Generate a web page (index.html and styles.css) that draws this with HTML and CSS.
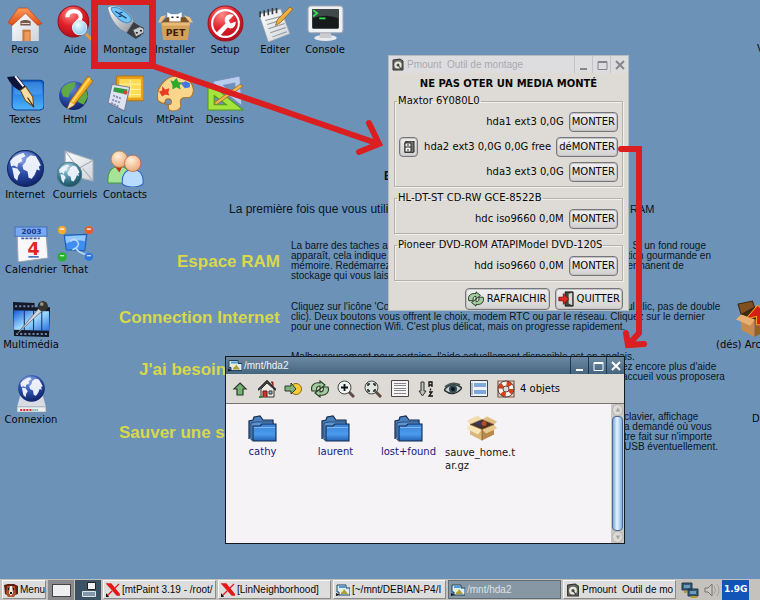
FILE: index.html
```html
<!DOCTYPE html>
<html lang="fr">
<head>
<meta charset="utf-8">
<title>Bureau</title>
<link rel="stylesheet" href="styles.css">
</head>
<body>
<svg class="defs" aria-hidden="true">
  <defs>
    <linearGradient id="blue" x1="0" y1="0" x2="0" y2="1"><stop offset="0" stop-color="#1260c8"/><stop offset="1" stop-color="#4cb4ff"/></linearGradient>
    <linearGradient id="roof" x1="0" y1="0" x2="0" y2="1"><stop offset="0" stop-color="#ff9a58"/><stop offset="1" stop-color="#dd4a12"/></linearGradient>
    <linearGradient id="metal" x1="0" y1="0" x2="1" y2="1"><stop offset="0" stop-color="#ffffff"/><stop offset="1" stop-color="#8d949c"/></linearGradient>
    <linearGradient id="paper" x1="0" y1="0" x2="1" y2="1"><stop offset="0" stop-color="#ffffff"/><stop offset="1" stop-color="#cfd3da"/></linearGradient>
    <linearGradient id="folderFill" x1="0" y1="0" x2="0" y2="1"><stop offset="0" stop-color="#3c84d8"/><stop offset=".6" stop-color="#4a9aec"/><stop offset="1" stop-color="#2563b4"/></linearGradient>
    <linearGradient id="film" x1="0" y1="0" x2="1" y2="1"><stop offset="0" stop-color="#1658d8"/><stop offset=".5" stop-color="#9cdcff"/><stop offset="1" stop-color="#2a70e0"/></linearGradient>
    <radialGradient id="red" cx=".4" cy=".25" r=".8"><stop offset="0" stop-color="#ff8c88"/><stop offset=".5" stop-color="#e0202a"/><stop offset="1" stop-color="#a80c18"/></radialGradient>
    <radialGradient id="world" cx=".4" cy=".25" r=".8"><stop offset="0" stop-color="#6c8ce0"/><stop offset=".5" stop-color="#2a4ea8"/><stop offset="1" stop-color="#0c1e60"/></radialGradient>
    <radialGradient id="teal" cx=".4" cy=".25" r=".8"><stop offset="0" stop-color="#a4d0e0"/><stop offset=".6" stop-color="#347890"/><stop offset="1" stop-color="#184858"/></radialGradient>
    <radialGradient id="skin" cx=".4" cy=".3" r=".8"><stop offset="0" stop-color="#fff0d8"/><stop offset="1" stop-color="#e8a070"/></radialGradient>
    <radialGradient id="lens" cx=".4" cy=".3" r=".8"><stop offset="0" stop-color="#f0fbff"/><stop offset="1" stop-color="#78c4ec"/></radialGradient>
    <symbol id="continents" viewBox="0 0 36 36">
      <path d="M3 11C6 7 11 4 16 3l2 3-4 2 1 3-4 2-1 4-3-2-3 1zM5 17l5 1 3 4-2 3-1 5-3-3-1-5zM19 8l4-3 5 1 3 5 2 4-2 1 1 4-3-1-2 5-3 4-3-1-1-6-4-2-1-4 3-3z" fill="#e8eefa"/>
      <ellipse cx="17" cy="8" rx="12" ry="6" fill="#fff" opacity=".18"/>
    </symbol>
    <symbol id="box" viewBox="0 0 32 26">
      <path d="M4 9l12 5v11L4 19z" fill="#d9b679"/><path d="M28 9l-12 5v11l12-6z" fill="#b8894c"/>
      <path d="M4 9l12-5 12 5-12 5z" fill="#4a3020"/>
      <path d="M4 9L16 4l-4-4L1 5z" fill="#f2dcae"/><path d="M28 9L16 4l5-3 10 5z" fill="#dfbd83"/>
      <circle cx="13" cy="8" r="2.500" fill="#30386c"/><circle cx="18" cy="8" r="2.500" fill="#b44c2c"/>
      <path d="M4 9l12 5-4 5L0 13z" fill="#f7e4ba"/><path d="M28 9l-12 5 4 4 11-5z" fill="#e9c98f"/>
      <path d="M4 9l12-5 12 5-12 5zM16 14v11" fill="none" stroke="#7c5a2c" stroke-width=".7"/>
    </symbol>
    <symbol id="folder" viewBox="0 0 30 27">
      <path d="M1 24V6l4-1 1-3 6-1 3 4h10v6" fill="#4a80bc" stroke="#142c4c" stroke-width="1.2"/>
      <path d="M3 25V8l5-1h17v18z" fill="#5d94d0" stroke="#1c3c64" stroke-width=".8"/>
      <path d="M5 11h7l2-2h14v17H5z" fill="url(#folderFill)" stroke="#122c50" stroke-width="1.1"/>
      <path d="M6 12.500h21" stroke="#8cc2fa" stroke-width=".8"/>
    </symbol>
    <symbol id="recycle" viewBox="0 0 18 18">
      <path d="M1 11C-1 5 4 2 9 3l0-2 5 4-5 4 0-3C6 6 5 8 6 11zM17 7c2 6-3 9-8 8l0 2-5-4 5-4 0 3c3 0 4-2 3-5z" fill="#a5cba0" stroke="#243c24" stroke-width="1.1"/>
    </symbol>
    <symbol id="pictures" viewBox="0 0 14 12">
      <path d="M1 1h9v3h4v7H3V8H1z" fill="#d8eef4" stroke="#1c425c"/><path d="M3 2h6v2H3z" fill="#4c9cd8"/><path d="M5 9l3-4 4 5H5z" fill="#b09c30"/><path d="M0 12V9l4 2z" fill="#101820"/><circle cx="6" cy="6" r="1.5" fill="#f4f0b0"/>
    </symbol>
    <symbol id="xlogo" viewBox="0 0 14 14">
      <path d="M1 1h4l9 11h-3zM13 1l-5 5M6 8l-5 5" fill="#e41818" stroke="#e41818" stroke-width="1.3"/><path d="M0 14v-4l3 4z" fill="#111"/>
    </symbol>
    <symbol id="disk" viewBox="0 0 12 13">
      <path d="M1 2l7-1 3 2v9H1z" fill="#686b64" stroke="#30302e"/><circle cx="6" cy="7" r="3.6" fill="#e8e8e0"/><circle cx="6" cy="7" r="1.5" fill="#505048"/><path d="M6 7l3 4" stroke="#333"/>
    </symbol>
    <symbol id="minimize" viewBox="0 0 12 12"><path d="M2 10h7" stroke="currentColor" stroke-width="2"/></symbol>
    <symbol id="maximize" viewBox="0 0 12 12"><path d="M2 2.5h9v8H2zM2 3.5h9" fill="none" stroke="currentColor"/></symbol>
    <symbol id="close" viewBox="0 0 12 12"><path d="M2 2l8 8M10 2l-8 8" stroke="currentColor" stroke-width="2"/></symbol>
  </defs>
</svg>

<main class="desktop">
  <section class="wallpaper">
    <b class="tip-head">B</b>
    <p class="tip tip--intro">La première fois que vous utilis</p>
    <p class="tip tip--intro-end">RAM</p>
    <h2 class="topic topic--ram">Espace RAM</h2>
    <p class="tip tip--ram">La barre des taches a<br>apparaît, cela indique<br>mémoire. Redémarrez<br>stockage qui vous lais</p>
    <p class="tip tip--ram-end"><span>. Si un fond rouge</span><span>ation gourmande en</span><span>permanent de</span></p>
    <h2 class="topic topic--net">Connection Internet</h2>
    <p class="tip tip--net">Cliquez sur l'icône 'Co<br>clic). Deux boutons vous offrent le choix, modem RTC ou par le réseau. Cliquez sur le dernier<br>pour une connection Wifi. C'est plus délicat, mais on progresse rapidement.</p>
    <p class="tip tip--net-end">ul clic, pas de double</p>
    <h2 class="topic topic--help">J'ai besoin</h2>
    <p class="tip tip--help">Malheureusement pour certains, l'aide actuellement disponible est en anglais.</p>
    <p class="tip tip--help-end">ez encore plus d'aide<br>accueil vous proposera</p>
    <h2 class="topic topic--save">Sauver une s</h2>
    <p class="tip tip--save-end">clavier, affichage<br>a demandé où vous<br>tre fait sur n'importe<br>USB éventuellement.</p>
  </section>

  <nav class="launchers" aria-label="Bureau">
    <a class="launcher" href="#"><svg viewBox="0 0 36 36"><path d="M5 18L18 6l13 12v17H5z" fill="url(#paper)"/><path d="M11 3l9 0 14 15-4 2L18 8 5 20l-4-3z" fill="url(#roof)" stroke="#b83c10" stroke-width=".6"/><path d="M15 24h8v11h-8z" fill="#c8763c"/><path d="M17 26h5v9h-5z" fill="#ed9a5a"/><path d="M13 16c2-2 8-2 10 0v4H13z" fill="#76584c"/><path d="M14 18h8" stroke="#e8d8c8" fill="none"/></svg><span>Perso</span></a>
    <a class="launcher" href="#"><svg viewBox="0 0 36 36"><circle cx="16" cy="16" r="15" fill="url(#red)" stroke="#9c1018"/><path d="M10 12c0-8 13-8 13 0 0 4-5 4-5 8" fill="none" stroke="#fff" stroke-width="4"/><path d="M28 28l7 7" stroke="#e09a3c" stroke-width="3"/><circle cx="22" cy="22" r="7" fill="url(#lens)" stroke="#d8e8f0"/></svg><span>Aide</span></a>
    <a class="launcher" href="#"><svg viewBox="0 0 36 36"><path d="M19 23l6-7 11 7-3 7-5 3-9-6z" fill="#3c3c40"/><path d="M25 24l7-3 4 2v4l-8 4z" fill="#c8ccd0" stroke="#444"/><path d="M28 27h2M32 25h2" stroke="#222" stroke-width="1.5"/><path d="M1 4C0 1 5 0 12 2c8 4 14 9 14 14l-7 11C11 24 4 16 1 4z" fill="url(#metal)" stroke="#788494" stroke-width=".7"/><path d="M4 3c6-3 18 5 20 11-2 5-8 4-12 0C8 10 4 7 4 3z" fill="#76c3f4" stroke="#3c8ccc"/><path d="M8 6l11 7m-7-5l3-1m-1 4l-3 0" fill="none" stroke="#114a80" stroke-width="1.2"/></svg><span>Montage</span></a>
    <a class="launcher" href="#"><svg viewBox="0 0 36 36"><path d="M10 15V7l4 2h6l4-2v8z" fill="#fff"/><path d="M14 11l1 1m4-1l-1 1m-3 2h3" stroke="#222" stroke-width="1.5"/><path d="M4 17h28l-2 17H6z" fill="#d3a15c"/><path d="M4 17l6-5h18l4 5z" fill="#7c512a"/><path d="M12 16V9l2 1h7l2-1v7z" fill="#fff"/><path d="M14 12h2m3 0h2" stroke="#222" stroke-width="1.5"/><path d="M4 17l5-7-5 1-3 6zM32 17l-6-7 6 2 3 5z" fill="#eec486"/><path d="M6 17h26v3H5z" fill="#e9bb77"/><text x="18" y="30" class="pet">PET</text></svg><span>Installer</span></a>
    <a class="launcher" href="#"><svg viewBox="0 0 36 36"><circle cx="18" cy="18" r="17" fill="url(#red)" stroke="#a01420"/><circle cx="18" cy="18" r="13" fill="none" stroke="#fff" stroke-width="2"/><path d="M9 27l9-9c-3-6 3-11 8-8l-5 5 2 3 5-2c0 6-4 8-8 6l-8 9z" fill="#fff"/></svg><span>Setup</span></a>
    <a class="launcher" href="#"><svg viewBox="0 0 36 36"><path d="M2 9l21-5 9 24-21 8z" fill="url(#paper)" stroke="#9a9fa6" stroke-width=".6"/><path d="M8 15l16-4M10 19l15-5M11 23l16-5M13 27l15-5M15 31l14-5" stroke="#8f959e"/><path d="M3 12V6m4 5V5m4 5V4m4 5V3m4 5V3" stroke="#36383e" stroke-width="1.6"/><path d="M18 20l2-6L32 2l3 2-12 13z" fill="#f0b040" stroke="#99601c" stroke-width=".8"/></svg><span>Editer</span></a>
    <a class="launcher" href="#"><svg viewBox="0 0 36 36"><ellipse cx="18" cy="32" rx="11" ry="3" fill="#e9eaee"/><path d="M13 26h10l1 6H12z" fill="#c9cbd0"/><rect x="1" y="1" width="34" height="26" rx="3" fill="#eff0f4" stroke="#a6aab2"/><rect x="5" y="4" width="26" height="19" rx="1" fill="#161a1a"/><path d="M5 13q13-5 26 0V4H5z" fill="#40494a"/><path d="M6 5l4 3-4 3M12 13h6" fill="none" stroke="#30ec50" stroke-width="1.6"/></svg><span>Console</span></a>

    <a class="launcher row-start" href="#"><svg viewBox="0 0 36 36"><rect x="5" y="5" width="31" height="29" rx="4" fill="url(#blue)" stroke="#0a3c98"/><rect x="7" y="7" width="27" height="12" rx="3" fill="#7cc4ff" opacity=".3"/><path d="M13 15l5-4 7 10 1 10-8-6z" fill="#f4dca4" stroke="#6c4c18"/><path d="M20 22l6 9" stroke="#3c2c10"/><path d="M0 2l10-1 8 10-6 4C6 12 3 8 0 2z" fill="#101438"/><path d="M8 1l8 10" stroke="#f0f0fc" stroke-width="2"/></svg><span>Textes</span></a>
    <a class="launcher" href="#"><svg viewBox="0 0 36 36"><circle cx="16" cy="20" r="14" fill="url(#world)"/><path d="M4 15c3-6 8-8 14-8l-1 5-4 4-2 6-5-1zM20 17l8-4 2 8-4 8-6-3z" fill="#60aa44"/><path d="M10 33l3-8L30 1l5 5-19 24z" fill="#f0a818" stroke="#94601c" stroke-width=".8"/><path d="M15 26L32 3" stroke="#ffd860" stroke-width="2"/><path d="M10 33l3-7 4 3z" fill="#f4dcae"/></svg><span>Html</span></a>
    <a class="launcher" href="#"><svg viewBox="0 0 36 36"><rect x="9" y="1" width="27" height="24" rx="2" fill="#e7a11c" stroke="#b47410"/><path d="M12 4h21v18H12z" fill="#ffdc58"/><path d="M12 9h21M12 14h21M12 19h21M23 5v17" stroke="#fff0a4"/><path d="M5 9l17 3-5 23-16-8z" fill="#dde2ef" stroke="#747c92"/><path d="M7 12l13 2-1 5-13-3z" fill="#2c9c3c"/><path d="M6 20l8 3m-9 1l8 3m-9 0l8 4" stroke="#8189b0" stroke-width="1.6" stroke-dasharray="2 1"/><circle cx="18" cy="17" r="2" fill="#e04030"/></svg><span>Calculs</span></a>
    <a class="launcher" href="#"><svg viewBox="0 0 36 36"><path d="M1 25C-2 13 8 2 18 1c12-1 19 9 17 16-1 6-5 5-8 5s-5 2-4 6c1 5-3 7-8 7-3 0-4-1-4-4 1-5-3-6-5-3z" fill="#fad68c" stroke="#b07030"/><circle cx="11" cy="26" r="3" fill="#6c92b7" stroke="#a86c30"/><path d="M2 16l3-1 0-4 3 3 4-1-1 4 1 3-4-1-3 2z" fill="#e83c24"/><path d="M13 5l3 1 3-3 2 4 4 0-3 3 1 4-4-2-4 2 0-4z" fill="#30a830"/><path d="M23 8l5-2 4 2 0 4-5 1z" fill="#4078e0"/></svg><span>MtPaint</span></a>
    <a class="launcher" href="#"><svg viewBox="0 0 36 36"><path d="M6 6l26-5 2 29L6 8zM16 10l12 11-1-13z" fill="#b8ccee" fill-rule="evenodd" stroke="#7890b8"/><path d="M1 7l34 27H1zM7 20v9h12z" fill="#a5e43c" fill-rule="evenodd" stroke="#4e9c18"/><path d="M7 27L32 9l3 2-26 18z" fill="#f0b44c" stroke="#946428" stroke-width=".7"/></svg><span>Dessins</span></a>

    <a class="launcher row-start" href="#"><svg viewBox="0 0 36 36"><circle cx="18" cy="18" r="17.5" fill="url(#world)" stroke="#13245c"/><use href="#continents"/></svg><span>Internet</span></a>
    <a class="launcher" href="#"><svg viewBox="0 0 36 36"><path d="M8 1l27 9v20L8 24z" fill="url(#paper)" stroke="#adb1b9"/><path d="M8 1l13 17 14-8M8 24l9-9m18 15l-10-12" fill="none" stroke="#a8adb6"/><circle cx="12" cy="24" r="12" fill="url(#teal)" stroke="#547c8c"/><use href="#continents" x="0" y="12" width="24" height="24"/></svg><span>Courriels</span></a>
    <a class="launcher" href="#"><svg viewBox="0 0 36 36"><path d="M1 32c-1-10 3-16 11-16s11 6 10 16z" fill="#a6e398" stroke="#3e9c3c"/><path d="M7 15l5 7 4-8z" fill="#c42820"/><circle cx="12" cy="9" r="8" fill="url(#skin)" stroke="#b28238" stroke-width=".7"/><path d="M15 33c-1-9 3-14 10-14s11 5 10 14c-4 4-16 4-20 0z" fill="#b7dcff" stroke="#2860c8"/><circle cx="25" cy="13" r="8" fill="url(#skin)" stroke="#bc5c40" stroke-width=".7"/></svg><span>Contacts</span></a>

    <a class="launcher launcher--wide row-start" href="#"><svg viewBox="0 0 36 36"><path d="M4 9l28-2 2 25-29 4z" fill="#f8f8fa" stroke="#a0a4ac"/><path d="M2 2h31v9H2z" fill="#78a8f0" stroke="#4470c0"/><text x="18" y="9" class="year">2003</text><path d="M8 13h18" stroke="#4664a4" stroke-width="1.5" stroke-dasharray="3 1"/><text x="20" y="29" class="day">4</text><path d="M15 31h10" stroke="#3468b8" stroke-width="1.5"/></svg><span>Calendrier</span></a>
    <a class="launcher" href="#"><svg viewBox="0 0 36 36"><path d="M5 5l26 26M31 5L5 31" stroke="#4c8cdc"/><path d="M7 10l22-1-2 16-18-1z" fill="#3f8ef0" stroke="#185cb0"/><path d="M8 11l20-1-1 6q-10-3-18 2z" fill="#94c8ff"/><path d="M15 24q8-3 5-8-4-4-7 0m5 6q3 6 13 7" fill="none" stroke="#bcdcff" stroke-width="1.5"/><circle cx="5" cy="5" r="4" fill="#f2ac28"/><circle cx="31" cy="5" r="4" fill="#e85c30"/><circle cx="5" cy="31" r="4.5" fill="#28b030"/><circle cx="31" cy="31" r="4" fill="#2c78e0"/><path d="M3 4h4M29 4h4M3 30h4M29 30h4" stroke="#fff"/></svg><span>Tchat</span></a>

    <a class="launcher launcher--wide row-start" href="#"><svg viewBox="0 0 36 36"><path d="M0 2l21 1v4h15l-1 29L1 35z" fill="#121828"/><path d="M1 10l34 1v19L1 29z" fill="url(#film)"/><path d="M2 6h18M3 33h31" stroke="#7485ad" stroke-width="2" stroke-dasharray="2 2"/><path d="M11 10v20M20 10v20M28 10v20" stroke="#17306c"/><path d="M3 34L26 7l3 3z" fill="#d2d5dc" stroke="#585c64" stroke-width=".7"/><circle cx="29" cy="6" r="5" fill="#343430"/><circle cx="28" cy="4" r="1.8" fill="#92928a"/></svg><span>Multimédia</span></a>

    <a class="launcher launcher--wide row-start" href="#"><svg viewBox="0 0 36 36"><path d="M7 20h22l3 11H4z" fill="#d6dbe4"/><path d="M4 31h28v5H4z" fill="#eceef2" stroke="#9a9fa9" stroke-width=".6"/><path d="M7 34h11" stroke="#d03030" stroke-width="2" stroke-dasharray="2 1"/><path d="M19 34h6" stroke="#50a080" stroke-width="2" stroke-dasharray="1 1"/><circle cx="18" cy="13" r="13" fill="url(#world)"/><use href="#continents" x="5" y="0" width="26" height="26"/></svg><span>Connexion</span></a>
  </nav>

  <a class="launcher launcher--archive" href="#"><svg viewBox="0 0 36 36"><path d="M5 14l13 5v17L5 29z" fill="#c98b4c"/><path d="M31 14l-13 5v17l13-7z" fill="#94602c"/><path d="M5 14l13-7 13 7-13 5z" fill="#42280f"/><path d="M5 14L2 4l14-3 2 6z" fill="#805020" stroke="#3c240c"/><path d="M9 19L21 5l13 12-6 1v6h-8v-8z" fill="#d42010" stroke="#f0a020"/><path d="M5 14l13 5-4 6L0 19z" fill="#e8b070"/></svg><span>(dés) Arc</span></a>
  <span class="edge-label edge-label--low">D</span>
  <span class="edge-label edge-label--top">V</span>

  <section class="window dialog" aria-label="Pmount">
    <header class="titlebar"><svg class="title-icon"><use href="#disk"/></svg><h1>Pmount&nbsp; Outil de montage</h1>
      <button aria-label="Réduire"><svg><use href="#minimize"/></svg></button><button aria-label="Agrandir"><svg><use href="#maximize"/></svg></button><button aria-label="Fermer"><svg><use href="#close"/></svg></button></header>
    <div class="dialog-body">
      <strong>NE PAS OTER UN MEDIA MONTÉ</strong>
      <fieldset><legend>Maxtor 6Y080L0</legend>
        <div class="device"><span>hda1 ext3 0,0G</span><button class="btn">MONTER</button></div>
        <div class="device"><button class="btn btn--icon" aria-label="Ouvrir hda2"><svg viewBox="0 0 12 12"><path d="M2 1l3-1h6v11l-3 1H2z" fill="#77756f" stroke="#292929"/><path d="M2 2h6v9H2zM2 6h6" fill="#f4f4f2" stroke="#292929"/><path d="M4 4h2M4 9h2" stroke="#292929"/></svg></button><span>hda2 ext3 0,0G 0,0G free</span><button class="btn">déMONTER</button></div>
        <div class="device"><span>hda3 ext3 0,0G</span><button class="btn">MONTER</button></div>
      </fieldset>
      <fieldset><legend>HL-DT-ST CD-RW GCE-8522B</legend>
        <div class="device"><span>hdc iso9660 0,0M</span><button class="btn">MONTER</button></div>
      </fieldset>
      <fieldset><legend>Pioneer DVD-ROM ATAPIModel DVD-120S</legend>
        <div class="device"><span>hdd iso9660 0,0M</span><button class="btn">MONTER</button></div>
      </fieldset>
      <footer><button class="btn btn--action"><svg viewBox="0 0 18 18"><use href="#recycle"/></svg>RAFRAICHIR</button><button class="btn btn--action"><svg viewBox="0 0 18 18"><path d="M8 1h9v16H8z" fill="#44443e" stroke="#111"/><path d="M12 3l4-1v14l-4-2z" fill="#d8d6ce"/><path d="M1 7h5V3l6 6-6 6v-4H1z" fill="#e02a20" stroke="#781010"/></svg>QUITTER</button></footer>
    </div>
  </section>

  <section class="window files" aria-label="/mnt/hda2">
    <header class="titlebar titlebar--active"><svg class="title-icon"><use href="#pictures"/></svg><h1>/mnt/hda2</h1>
      <button aria-label="Réduire"><svg><use href="#minimize"/></svg></button><button aria-label="Agrandir"><svg><use href="#maximize"/></svg></button><button aria-label="Fermer"><svg><use href="#close"/></svg></button></header>
    <div class="toolbar">
      <div class="tools">
      <button aria-label="Parent"><svg viewBox="0 0 18 18"><path d="M9 3l6 6h-3v6H6V9H3z" fill="#78b074" stroke="#263c28" stroke-width="1.2"/></svg></button>
      <button aria-label="Accueil"><svg viewBox="0 0 18 18"><path d="M3 9v8h13V9L9 3z" fill="#e9e7e0" stroke="#333"/><path d="M0 10L9 1l9 9" fill="none" stroke="#292929" stroke-width="1.8"/><path d="M13 2h2v4M5 17v-6h4v6" fill="#c33830" stroke="#711"/><path d="M11 11h3v3h-3z" fill="#8cbce4" stroke="#333"/><path d="M1 17h3" stroke="#388438" stroke-width="2"/></svg></button>
      <button aria-label="Signets"><svg viewBox="0 0 18 18"><circle cx="12" cy="9" r="5.5" fill="#f8cc38" stroke="#8e6a14"/><path d="M1 6h6V3l5 6-5 5v-3H1z" fill="#81b27a" stroke="#263c28"/></svg></button>
      <button aria-label="Actualiser"><svg viewBox="0 0 18 18"><use href="#recycle"/></svg></button>
      <button aria-label="Zoom avant"><svg viewBox="0 0 18 18"><path d="M12 12l5 5" stroke="#5b4b42" stroke-width="3"/><circle cx="7.5" cy="7.5" r="6.5" fill="#eef2f0" stroke="#444"/><path d="M4 7.5h7M7.5 4v7" stroke="#111" stroke-width="1.8"/></svg></button>
      <button aria-label="Zoom auto"><svg viewBox="0 0 18 18"><path d="M12 12l5 5" stroke="#5b4b42" stroke-width="3"/><circle cx="7.5" cy="7.5" r="6.5" fill="#dfe6e2" stroke="#444"/><path d="M4 6V4h2m3 0h2v2m0 3v2H9m-3 0H4V9" fill="none" stroke="#222" stroke-width="1.5"/></svg></button>
      <button aria-label="Détails"><svg viewBox="0 0 18 18"><path d="M.5.5h17v16H.5z" fill="#f4f4f2" stroke="#444"/><path d="M3 3.5h12M3 5.5h12M3 8.5h12M3 10.5h12M3 13.5h12" stroke="#84848c"/></svg></button>
      <button aria-label="Trier"><svg viewBox="0 0 18 18"><path d="M4 2h3v9h2l-3.500 5-3.500-5h2z" fill="#b9c6b4" stroke="#333"/><path d="M12 7V2h3v5m-3-2h3M13.500 8.500v2M12 12h3l-3 4h4" fill="none" stroke="#111" stroke-width="1.3"/></svg></button>
      <button aria-label="Fichiers cachés"><svg viewBox="0 0 18 18"><path d="M0 10Q8 0 18 8q-8 10-18 2z" fill="#c2ced0" stroke="#283030" stroke-width="1.4"/><circle cx="9" cy="9" r="4" fill="#314e58"/><circle cx="9" cy="9" r="2" fill="#0c1418"/><path d="M1 7Q8 1 16 5" fill="none" stroke="#4c5452" stroke-width="2"/></svg></button>
      <button aria-label="Sélection"><svg viewBox="0 0 18 18"><path d="M.5.5h17v16H.5z" fill="#eff1f4" stroke="#3c4048"/><path d="M4 3h12v4H4zM4 10h12v4H4z" fill="#7ca8dc"/><path d="M2 3v12" stroke="#789"/></svg></button>
      <button aria-label="Aide"><svg viewBox="0 0 18 18"><path d="M1 1h16v16H1z" fill="none" stroke="#7c5844" stroke-width="1.2"/><circle cx="9" cy="9" r="5.500" fill="none" stroke="#f5f2ea" stroke-width="4.500"/><circle cx="9" cy="9" r="5.500" fill="none" stroke="#d8401c" stroke-width="4.500" stroke-dasharray="4.320 4.320"/><circle cx="9" cy="9" r="8" fill="none" stroke="#442820" stroke-width=".8"/><circle cx="9" cy="9" r="3" fill="none" stroke="#442820" stroke-width=".8"/></svg></button>
      </div>
      <span>4 objets</span>
    </div>
    <div class="file-area">
      <ul>
        <li><a class="file" href="#"><svg viewBox="0 0 30 27"><use href="#folder"/></svg><span>cathy</span></a></li>
        <li><a class="file" href="#"><svg viewBox="0 0 30 27"><use href="#folder"/></svg><span>laurent</span></a></li>
        <li><a class="file" href="#"><svg viewBox="0 0 30 27"><use href="#folder"/></svg><span>lost+found</span></a></li>
        <li><a class="file file--archive" href="#"><svg viewBox="0 0 32 26"><use href="#box"/></svg><span>sauve_home.t<wbr>ar.gz</span></a></li>
      </ul>
      <div class="scrollbar"><span class="cap"><svg viewBox="0 0 10 10"><path d="M5 2l3 5H2z" fill="#a6a6a2"/></svg></span><span class="thumb"></span><span class="cap"><svg viewBox="0 0 10 10"><path d="M5 8l3-5H2z" fill="#a6a6a2"/></svg></span></div>
    </div>
  </section>

  <svg class="marks" viewBox="0 0 760 600" aria-hidden="true">
    <path d="M94.500 1.500h58v64h-58z" stroke-width="7"/>
    <path d="M153 66L379 144M369 123l10 21-20 8" stroke-width="6"/>
    <path d="M621 149h18V333l-11 12M626 333l2 12 16-1" stroke-width="6"/>
  </svg>
</main>

<footer class="taskbar">
  <button class="task task--menu"><svg viewBox="0 0 14 14"><path d="M0 2l4-1h6l4 2v8l-3 1V6H3v6l-2-1z" fill="#5a2010"/><path d="M3 3h8l1 8-2 3H4l-2-3z" fill="#a85030"/><path d="M6 3h2l1 7-2 3-2-3z" fill="#f5eee6"/><path d="M4 6h1m4 0h1m-4 4h2" stroke="#111" stroke-width="2"/></svg>Menu</button>
  <div class="pager"><button class="page" aria-label="Bureau 1"><i></i></button><button class="page page--current" aria-label="Bureau 2"><svg viewBox="0 0 26 20"><path d="M12.500 2.500h8v7h-8z" fill="#f0f0f0" stroke="#222"/><path d="M7.500 11.500h13v5h-13z" fill="#8297ac" stroke="#dfe4e8"/></svg></button></div>
  <div class="tasks">
    <button class="task"><svg><use href="#xlogo"/></svg><span>[mtPaint 3.19 - /root/</span></button>
    <button class="task"><svg><use href="#xlogo"/></svg><span>[LinNeighborhood]</span></button>
    <button class="task"><svg><use href="#pictures"/></svg><span>[~/mnt/DEBIAN-P4/I</span></button>
    <button class="task task--active"><svg><use href="#pictures"/></svg><span>/mnt/hda2</span></button>
    <button class="task"><svg><use href="#disk"/></svg><span>Pmount&nbsp; Outil de mo</span></button>
  </div>
  <div class="tray">
    <svg viewBox="0 0 18 16"><path d="M1 1h10v7H1zM7 7h10v7H7z" fill="#315c80" stroke="#26343e"/><path d="M3 3h6v3H3zM9 9h6v3H9z" fill="#6c9cb8"/><path d="M3 10h3M10 15h6" stroke="#b09c30" stroke-width="2"/></svg>
    <svg viewBox="0 0 18 16"><path d="M2 6h3l4-4v12l-4-4H2z" fill="#c8c8c4" stroke="#73736f"/><path d="M11 4q3 4 0 8M14 2q4 6 0 12" fill="none" stroke="#a2a29e"/></svg>
    <b>1.9G</b>
  </div>
</footer>
</body>
</html>
```

FILE: styles.css
```css
* { box-sizing: border-box; }

body {
  margin: 0;
  height: 100vh;
  display: flex;
  flex-direction: column;
  overflow: hidden;
  background: #6c92b7;
  color: #080808;
  font: 10px/12px "DejaVu Sans", sans-serif;
}

button {
  margin: 0;
  padding: 0;
  border: 0;
  background: none;
  color: inherit;
  font: inherit;
}

a { color: inherit; text-decoration: none; }
svg { display: block; flex: none; }
.defs { position: absolute; width: 0; height: 0; }

.desktop { position: relative; flex: 1; min-height: 0; overflow: hidden; }

/* Help text painted on the desktop background */
.wallpaper { color: #0a1622; font-family: "Liberation Sans", sans-serif; }
.tip, .topic, .tip-head { position: absolute; margin: 0; white-space: nowrap; }
.tip { font-size: 10px; line-height: 10px; }
.tip-head { left: 384px; top: 170px; font-size: 12px; }
.topic { color: #d8d84c; font-size: 17px; line-height: 18px; font-weight: bold; }
.topic--ram { left: 177px; top: 253px; }
.topic--net { left: 119px; top: 309px; }
.topic--help { left: 139px; top: 361px; }
.topic--save { left: 119px; top: 424px; }
.tip--intro { left: 229px; top: 204px; font-size: 12px; }
.tip--intro-end { left: 630px; top: 204px; font-size: 11px; }
.tip--ram { left: 291px; top: 241px; }
.tip--ram-end { left: 622px; top: 241px; display: grid; }
.tip--ram-end span:first-child { padding-left: 5px; }
.tip--net { left: 291px; top: 302px; }
.tip--net-end { left: 627px; top: 302px; }
.tip--help { left: 291px; top: 352px; }
.tip--help-end { left: 622px; top: 362px; }
.tip--save-end { left: 624px; top: 412px; }

/* Desktop launchers */
.launchers {
  position: absolute;
  left: 0;
  top: 5px;
  display: grid;
  grid-template-columns: repeat(7, 50px);
  grid-template-rows: 70px;
  grid-auto-rows: 75px;
}
.row-start { grid-column-start: 1; }
.launcher {
  display: flex;
  flex-direction: column;
  align-items: center;
  gap: 2px;
  width: 50px;
  white-space: nowrap;
}
.launcher svg { width: 37px; height: 37px; }
.launcher--wide { width: 62px; }
.launcher--archive {
  position: absolute;
  left: 716px;
  top: 300px;
  align-items: flex-start;
}
.launcher--archive svg { margin-left: 20px; }
.pet { font: bold 9px "DejaVu Sans", sans-serif; fill: #38240c; text-anchor: middle; }
.year { font: bold 7px "DejaVu Sans", sans-serif; fill: #183c8c; text-anchor: middle; }
.day { font: bold 17px "DejaVu Sans", sans-serif; fill: #e02424; text-anchor: middle; }
.edge-label { position: absolute; white-space: nowrap; }
.edge-label--low { left: 752px; top: 413px; }
.edge-label--top { left: 757px; top: 43px; }

/* Windows */
.window { position: absolute; }
.titlebar {
  display: flex;
  align-items: center;
  height: 17px;
  background: #dddde0;
  color: #aaaaae;
  font-family: "Liberation Sans", sans-serif;
}
.titlebar h1 { flex: 1; margin: 0; font-size: 10px; font-weight: normal; white-space: nowrap; }
.title-icon { width: 14px; height: 13px; margin: 0 2px; }
.titlebar button {
  display: grid;
  place-items: center;
  align-self: stretch;
  width: 18px;
  border-left: 1px solid #c4c4c8;
  color: #85858c;
}
.titlebar button svg { width: 12px; height: 12px; }
.titlebar--active { background: linear-gradient(#6c8aa2, #45647e); color: #f0f4f6; }
.titlebar--active button { border-color: #20384c; color: #fff; }

.dialog {
  left: 388px;
  top: 55px;
  width: 241px;
  border: 1px solid #b9bcbe;
  background: #dedbd6;
}
.dialog-body { display: flex; flex-direction: column; padding: 4px 5px 0; }
.dialog strong { text-align: center; line-height: 14px; }
fieldset {
  min-width: 0;
  margin: 4px 0 0;
  padding: 5px 4px 4px;
  border: 1px solid #b4b1aa;
  box-shadow: inset 1px 1px #f2f0ed, 1px 1px #f2f0ed;
}
fieldset + fieldset { margin-top: 5px; }
legend { margin-left: -2px; padding: 0 1px; line-height: 12px; }
.device { display: flex; justify-content: flex-end; align-items: center; gap: 5px; }
.device + .device { margin-top: 5px; }
.device span { white-space: nowrap; }
.btn {
  height: 20px;
  padding: 0 2px;
  border: 1px solid #77777b;
  border-radius: 4px;
  background: linear-gradient(#f0f0f0, #d2d1d0);
  box-shadow: inset 0 0 0 1px #c4c3c3;
}
.btn--icon { display: grid; place-items: center; width: 19px; margin-right: auto; }
.btn--icon svg { width: 12px; height: 12px; }
.dialog footer { display: flex; justify-content: flex-end; gap: 5px; padding: 7px 0 0; }
.btn--action { display: flex; align-items: center; gap: 3px; height: 22px; padding: 0 2px; }
.btn--action svg { width: 16px; height: 16px; }

.files {
  left: 225px;
  top: 356px;
  width: 400px;
  border: 1px solid #141a20;
  box-shadow: inset 0 0 0 1px #3c5068;
}
.toolbar {
  display: flex;
  align-items: center;
  height: 30px;
  padding: 0 5px;
  gap: 5px;
  border-bottom: 1px solid #77746f;
  background: #dedbd6;
}
.tools { display: flex; justify-content: space-between; width: 284px; }
.toolbar svg { width: 18px; height: 18px; }
.file-area { display: flex; height: 139px; background: #f6f3f7; }
.file-area ul { flex: 1; display: flex; margin: 0; padding: 11px 0 0; list-style: none; }
.file {
  display: flex;
  flex-direction: column;
  align-items: center;
  gap: 4px;
  width: 73px;
  color: #18187c;
}
.file svg { width: 30px; height: 27px; }
.file--archive { color: #151515; }
.file--archive svg { width: 32px; }
.file--archive span { line-height: 13px; }
.scrollbar {
  display: flex;
  flex-direction: column;
  width: 13px;
  padding: 0 1px;
  background: #cbc8c4;
}
.cap { display: grid; place-items: center; height: 12px; border: 1px solid #b5b3af; border-radius: 6px; background: #dddbd7; }
.cap svg { width: 8px; height: 8px; }
.thumb {
  flex: 1;
  border: 1px solid #4a6890;
  border-radius: 4px;
  background: linear-gradient(90deg, #79a8e0, #e6f4ff 45%, #7cb0ea);
}

/* Hand-drawn arrows over the windows */
.marks {
  position: absolute;
  left: 0;
  top: 0;
  width: 760px;
  height: 600px;
  fill: none;
  stroke: #db1f20;
  stroke-linecap: round;
  pointer-events: none;
}

/* Taskbar */
.taskbar {
  position: relative;
  display: flex;
  height: 21px;
  padding: 1px 0 0 2px;
  gap: 2px;
  background: #c5c2be;
  font: 10px/12px "Liberation Sans", sans-serif;
}
.task {
  display: flex;
  align-items: center;
  gap: 2px;
  min-width: 0;
  height: 19px;
  padding: 0 2px;
  overflow: hidden;
  border: 1px solid #8a8a8a;
  border-top-color: #f7f7f7;
  border-left-color: #f7f7f7;
  background: #dedddd;
  white-space: nowrap;
}
.task svg { width: 14px; height: 14px; }
.task span { flex: 1; overflow: hidden; text-align: left; }
.task--menu { width: 44px; padding: 0 1px; }
.task--active { border-color: #5e6c78; background: #8797a3; color: #dce2e6; }
.pager { display: flex; gap: 1px; width: 53px; }
.page { display: grid; place-items: center; flex: 1; background: #8b8b8d; }
.page i { width: 19px; height: 13px; border: 1px solid #444; background: #f0eff0; }
.page--current { background: #3c5262; }
.page svg { width: 26px; height: 20px; }
.tasks { display: flex; flex: 1; gap: 2px; }
.tasks .task { flex: 1; }
.tray { display: flex; align-items: center; gap: 4px; width: 82px; padding-left: 3px; }
.tray svg { width: 18px; height: 16px; }
.tray b {
  align-self: stretch;
  margin-left: -3px;
  padding: 0 2px;
  background: #1155b8;
  color: #fff;
  font: bold 9px/19px "DejaVu Sans", sans-serif;
}
```
